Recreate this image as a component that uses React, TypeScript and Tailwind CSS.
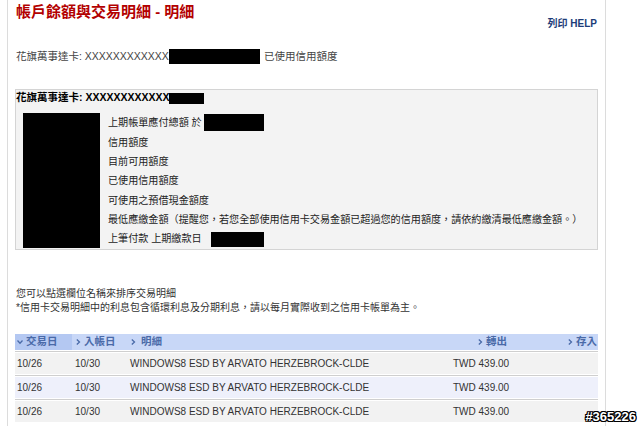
const font = { fontFamily: '"Liberation Sans", "Noto Sans CJK TC", sans-serif' };

const summaryRows = [
  "上期帳單應付總額 於",
  "信用額度",
  "目前可用額度",
  "已使用信用額度",
  "可使用之預借現金額度",
  "最低應繳金額（提醒您，若您全部使用信用卡交易金額已超過您的信用額度，請依約繳清最低應繳金額。）",
  "上筆付款 上期繳款日",
];

const txns = [
  { date: "10/26", post: "10/30", desc: "WINDOWS8 ESD BY ARVATO HERZEBROCK-CLDE", out: "TWD 439.00", bg: "bg-[#f2f2f2]" },
  { date: "10/26", post: "10/30", desc: "WINDOWS8 ESD BY ARVATO HERZEBROCK-CLDE", out: "TWD 439.00", bg: "bg-[#eef0fb]" },
  { date: "10/26", post: "10/30", desc: "WINDOWS8 ESD BY ARVATO HERZEBROCK-CLDE", out: "TWD 439.00", bg: "bg-[#f2f2f2]" },
];

const Chevron = ({ down = false }: { down?: boolean }) => (
  <svg width="6" height="6" viewBox="0 0 6 6" className="mr-[3px] shrink-0">
    {down ? (
      <path d="M0.5 1.5 L3 4.2 L5.5 1.5" fill="none" stroke="#4a6aa8" strokeWidth="1.3" />
    ) : (
      <path d="M1.8 0.5 L4.5 3 L1.8 5.5" fill="none" stroke="#4a6aa8" strokeWidth="1.3" />
    )}
  </svg>
);

export default function App() {
  return (
    <div className="relative w-[640px] h-[426px] overflow-hidden bg-white" style={font}>
      <div className="ml-[7px] w-[599px] h-[426px] border-x border-[#dcdcdc] px-[7px]">
        {/* title + print/help */}
        <div className="flex items-start justify-between pt-[3px] pl-px pr-[1px]">
          <h1 className="text-[15px] leading-[18px] font-bold text-[#b30000]">帳戶餘額與交易明細 - 明細</h1>
          <a className="mt-[15px] text-[10px] leading-[12px] font-bold text-[#1d3c78]">列印 HELP</a>
        </div>

        <div className="mt-[19px] flex items-center h-[15px] pl-px text-[10.5px] text-[#444]">
          <span>花旗萬事達卡: XXXXXXXXXXXX</span>
          <span className="inline-block w-[91px] h-[15px] bg-black" />
          <span className="ml-[4px]">已使用信用額度</span>
        </div>

        {/* summary box */}
        <div className="mt-[25px] border border-[#d4d4d4] bg-[#f3f3f3]">
          <div className="mt-[2px] flex items-center h-[12px] text-[10.5px] font-bold text-black">
            <span>花旗萬事達卡: XXXXXXXXXXXX</span>
            <span className="inline-block w-[35px] h-[11px] bg-black" />
          </div>
          <div className="mt-[9px] flex pl-[7px]">
            <div className="w-[77px] h-[135px] bg-black" />
            <div className="ml-[8px] flex flex-col text-[10.1px] text-[#222]">
              {summaryRows.map((r, i) => (
                <div key={i} className="h-[19.4px] flex items-center">
                  <span>{r}</span>
                  {i === 0 && <span className="ml-[2px] inline-block w-[60px] h-[17px] bg-black" />}
                  {i === 6 && <span className="ml-[9px] inline-block w-[53px] h-[15px] bg-black" />}
                </div>
              ))}
            </div>
          </div>
        </div>

        <div className="mt-[37px] pl-px text-[10px] leading-[14px] text-[#333]">
          <p>您可以點選欄位名稱來排序交易明細</p>
          <p>*信用卡交易明細中的利息包含循環利息及分期利息，請以每月實際收到之信用卡帳單為主。</p>
        </div>

        {/* transactions */}
        <div className="mt-[19px]">
          <div className="grid grid-cols-[57px_56px_1fr_62px_85px] h-[16px] bg-[#c8d7f7] text-[10.5px] font-bold text-[#4a6aa8]">
            <div className="flex items-center pl-[2px] bg-[#b4c8f2]"><Chevron down />交易日</div>
            <div className="flex items-center pl-[3px]"><Chevron />入帳日</div>
            <div className="flex items-center pl-[2px]"><Chevron /><span className="ml-[2px]">明細</span></div>
            <div className="flex items-center justify-end pr-[6px]"><Chevron />轉出</div>
            <div className="flex items-center justify-end pr-[1px]"><Chevron />存入</div>
          </div>
          {txns.map((t, i) => (
            <div key={i} className="mt-px border-t border-[#cfcfcf]">
              <div className={`mt-px h-[21px] grid grid-cols-[57px_56px_1fr_62px_85px] items-center text-[10px] text-[#333] ${t.bg}`}>
                <div className="pl-[2px]">{t.date}</div>
                <div className="pl-[3px]">{t.post}</div>
                <div className="pl-[2px]">{t.desc}</div>
                <div className="pl-[2px] whitespace-nowrap">{t.out}</div>
                <div />
              </div>
            </div>
          ))}
        </div>
      </div>

      <div className="absolute right-[4px] bottom-[2px] text-[13px] font-bold leading-[14px] text-white [text-shadow:-1px_0_#000,1px_0_#000,0_-1px_#000,0_1px_#000,-1px_-1px_#000,1px_1px_#000,-1px_1px_#000,1px_-1px_#000]">
        #365226
      </div>
    </div>
  );
}
